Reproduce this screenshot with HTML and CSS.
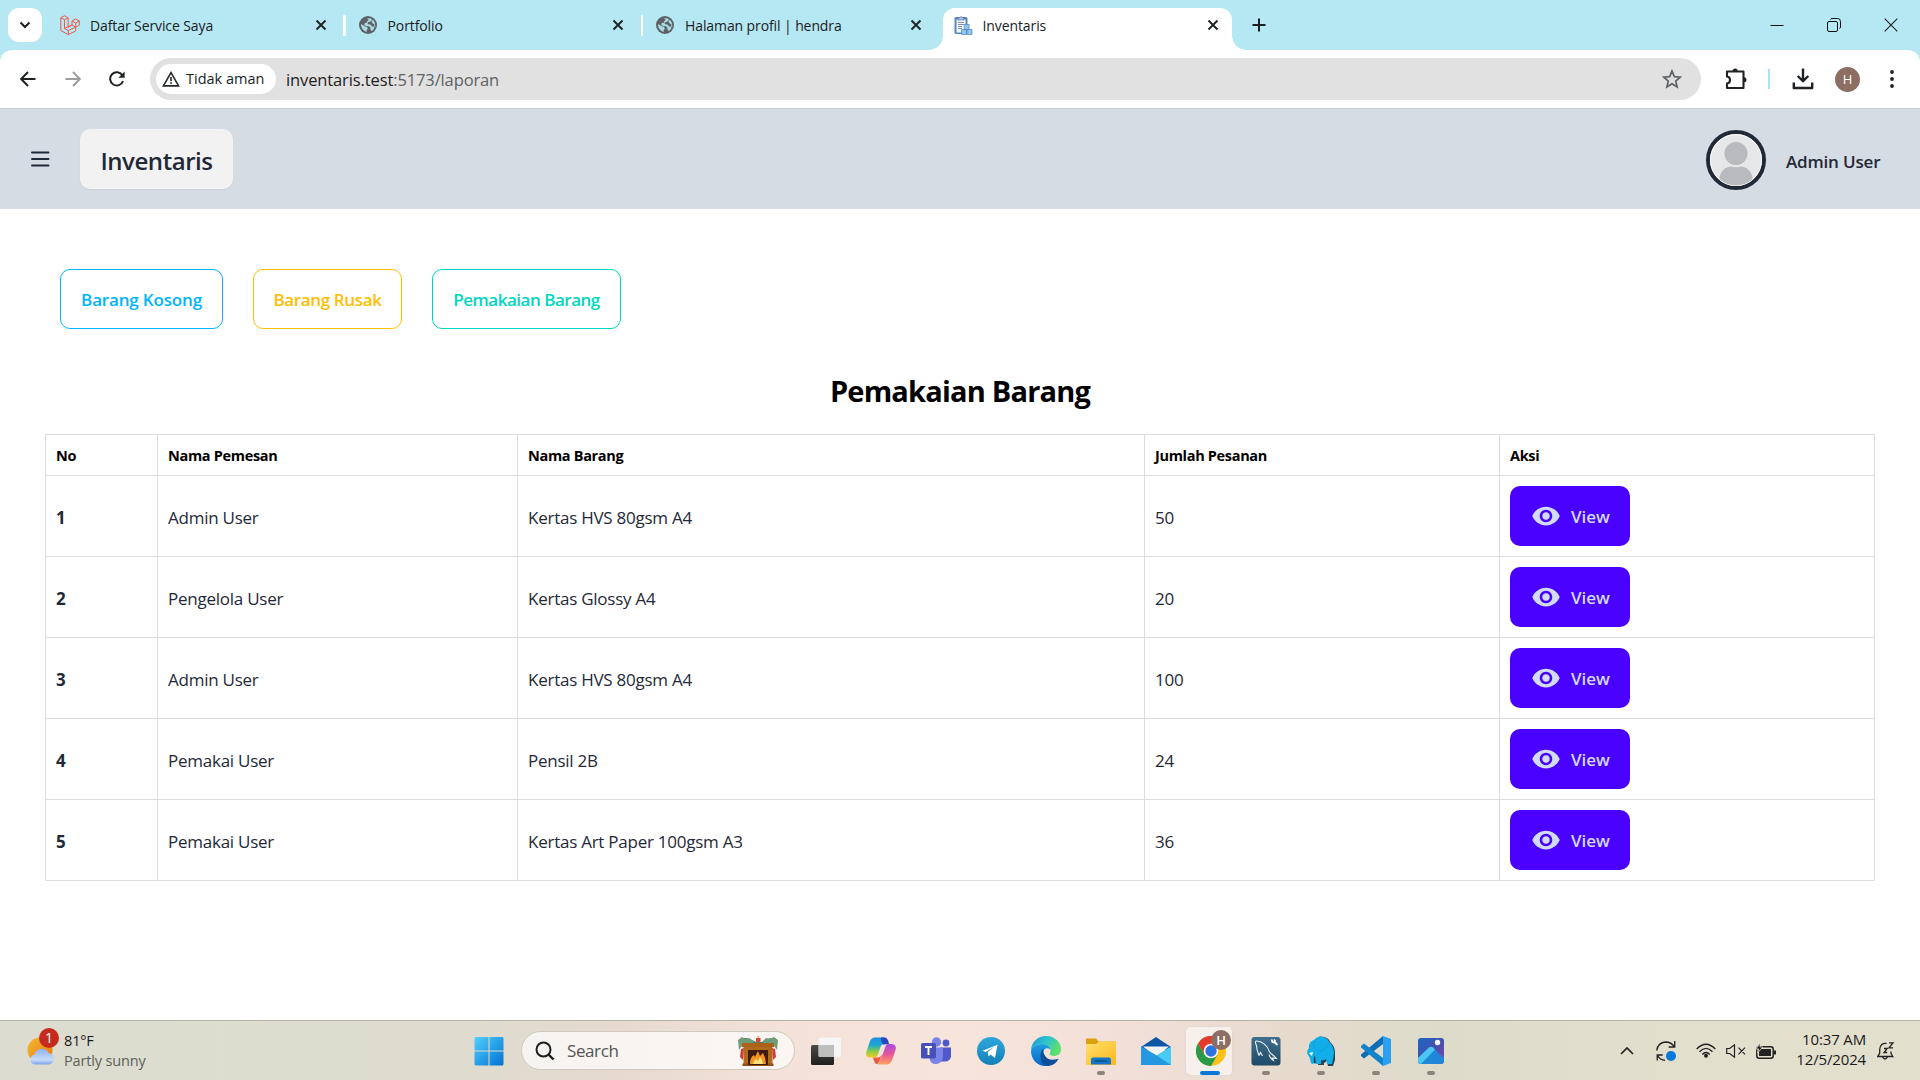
FILE: index.html
```html
<!DOCTYPE html>
<html lang="id">
<head>
<meta charset="utf-8">
<title>Inventaris</title>
<link rel="stylesheet" href="styles.css">
</head>
<body>
<svg class="defs" aria-hidden="true">
  <defs>
    <symbol id="close" viewBox="0 0 12 12"><path d="M1.500 1.500l9 9M10.500 1.500l-9 9" stroke="#1c2426" stroke-width="1.900" fill="none"/></symbol>
    <symbol id="globe" viewBox="0 0 18 18"><circle cx="9" cy="9" r="9" fill="#5c6266"/><path d="M2 8l3.800 2.300 2.600.9.300 1.800-1.200 1.300.3 1.700C4.500 15 1.900 12 2 8zM8 2.200l4.300.3.500 1.800-1.800 1.500-2 .4-.4 1.800 3.200.8 1.200 1.700 2.600.2.600.9C16.500 8.500 15.800 5.500 14 4l-1.500 1 .6 2 2.300 1.500-.2 4-2.200 2.700-1.600-1.600-.1-2.300-2.200-1.200-1.900.2-1.900-1.300.4-1.900 2.100-.4.500-1.700 1.500-1z" fill="#b5e8f3" fill-opacity=".9"/></symbol>
    <symbol id="eye" viewBox="0 0 24 24"><path d="M12 4.500C7 4.500 2.730 7.610 1 12c1.730 4.390 6 7.500 11 7.500s9.270-3.110 11-7.500c-1.730-4.390-6-7.500-11-7.500zM12 17c-2.760 0-5-2.240-5-5s2.240-5 5-5 5 2.240 5 5-2.240 5-5 5zm0-8c-1.660 0-3 1.340-3 3s1.340 3 3 3 3-1.340 3-3-1.340-3-3-3z" fill="currentColor"/></symbol>
    <linearGradient id="win" x1="0" y1="0" x2="1" y2="1"><stop offset="0" stop-color="#50d0fd"/><stop offset="1" stop-color="#0172d3"/></linearGradient>
    <linearGradient id="sun" x1="0" y1="0" x2="1" y2="1"><stop offset="0" stop-color="#f0bd31"/><stop offset="1" stop-color="#f0700d"/></linearGradient>
    <linearGradient id="cloud" x1="0" y1="0" x2="0" y2="1"><stop offset="0" stop-color="#8fb3f3"/><stop offset=".7" stop-color="#c9dbf7"/><stop offset="1" stop-color="#7ba3ee"/></linearGradient>
    <linearGradient id="dark" x1="0" y1="0" x2="0" y2="1"><stop offset="0" stop-color="#4a4a48"/><stop offset="1" stop-color="#1f1f1e"/></linearGradient>
    <linearGradient id="copA" x1="0" y1="0" x2="0" y2="1"><stop offset="0" stop-color="#1d8fe8"/><stop offset=".4" stop-color="#1fa8c8"/><stop offset=".7" stop-color="#8ccf4a"/><stop offset="1" stop-color="#f7c824"/></linearGradient>
    <linearGradient id="copB" x1="0" y1="0" x2="0" y2="1"><stop offset="0" stop-color="#a94be8"/><stop offset=".5" stop-color="#e8559a"/><stop offset="1" stop-color="#fda45c"/></linearGradient>
    <linearGradient id="tg" x1="0" y1="0" x2="0" y2="1"><stop offset="0" stop-color="#2ea6dc"/><stop offset="1" stop-color="#1480ba"/></linearGradient>
    <linearGradient id="edgeA" x1="0" y1="0" x2="1" y2=".5"><stop offset="0" stop-color="#1b8fd6"/><stop offset=".5" stop-color="#2cc3cf"/><stop offset="1" stop-color="#5fe06a"/></linearGradient>
    <linearGradient id="edgeB" x1="0" y1="0" x2="0" y2="1"><stop offset="0" stop-color="#1b9de2"/><stop offset="1" stop-color="#0a68c8"/></linearGradient>
    <linearGradient id="fold" x1="0" y1="0" x2="1" y2="1"><stop offset="0" stop-color="#ffdf6e"/><stop offset="1" stop-color="#fcb91c"/></linearGradient>
    <linearGradient id="ms" x1="0" y1="0" x2="0" y2="1"><stop offset="0" stop-color="#3f6f8f"/><stop offset="1" stop-color="#1f4a66"/></linearGradient>
    <linearGradient id="ph" x1="0" y1="0" x2="1" y2="1"><stop offset="0" stop-color="#1767c4"/><stop offset=".55" stop-color="#4a4fae"/><stop offset="1" stop-color="#7d4da8"/></linearGradient>
  </defs>
</svg>

<header class="browser">
  <div class="tabs">
    <button class="tab-search"><svg width="12" height="8" viewBox="0 0 12 8"><path d="M1.500 1.500L6 6l4.500-4.500" fill="none" stroke="#1b2022" stroke-width="2"/></svg></button>
    <div class="tab">
      <svg class="fav" viewBox="0 0 20 20" fill="none" stroke="#ee5a4e" stroke-width="1"><path d="M.8 2.700L4.500.8l3.600 1.900v9.500L12 10V6l3.700-2 3.600 2v4.200l-3.600 2V16l-7.500 3.600L.8 15.500zM.8 2.700l3.700 2 3.600-2M4.500 4.700v8.800l7.500-3.500M4.500 13.500l3.800 2 7.400-3.300M8.300 15.500v4M12 6l3.700 2.100L19.300 6M15.700 8.100v4.100M12 10l3.700 2.200"/></svg>
      <span class="tab-name">Daftar Service Saya</span><svg class="x"><use href="#close"/></svg>
    </div>
    <div class="tab">
      <svg class="fav small"><use href="#globe"/></svg>
      <span class="tab-name">Portfolio</span><svg class="x"><use href="#close"/></svg>
    </div>
    <div class="tab last">
      <svg class="fav small"><use href="#globe"/></svg>
      <span class="tab-name">Halaman profil | hendra</span><svg class="x"><use href="#close"/></svg>
    </div>
    <div class="tab active">
      <svg class="fav" viewBox="0 0 20 20"><rect x="1.500" y="2" width="13" height="17" rx="1.500" fill="#5e86bd"/><path d="M3.500 4.500h9v13h-9z" fill="#f2f6fb"/><path d="M5 3h1.500a1.700 1.700 0 0 1 3.200 0H11v2H5z" fill="#b8c9e2" stroke="#4a6fa5" stroke-width=".7"/><path d="M5 7.500h6M5 9.500h6M5 11.500h4M5 13.500h4" stroke="#7d93b5" stroke-width="1"/><path d="M8.500 14.500h5v5h-5zM14 14.500h5v5h-5zM11.300 9.500h4.800v5h-4.800z" fill="#8fc4ee" stroke="#4a86c4" stroke-width=".7"/></svg>
      <span class="tab-name">Inventaris</span><svg class="x"><use href="#close"/></svg>
    </div>
    <svg class="plus" viewBox="0 0 14 14"><path d="M7 .5v13M.5 7h13" stroke="#1b2022" stroke-width="2"/></svg>
    <div class="win-controls">
      <svg width="14" height="14"><path d="M.5 7.500h13" stroke="#111" stroke-width="1"/></svg>
      <svg width="14" height="14" fill="none" stroke="#111"><rect x=".5" y="3.500" width="10" height="10" rx="1.500"/><path d="M3.500 1.500q.3-1 1.500-1h5.500a3 3 0 0 1 3 3V9q0 1.300-1 1.500"/></svg>
      <svg width="14" height="14"><path d="M.7.700l12.600 12.600M13.300.7L.7 13.300" stroke="#1b2022" stroke-width="1.100"/></svg>
    </div>
  </div>
  <div class="toolbar">
    <svg class="nav-ico back" viewBox="0 0 16 16"><path d="M15.500 8H1.500M8 1L1.200 8 8 15" fill="none" stroke="#1f2224" stroke-width="2"/></svg>
    <svg class="nav-ico fwd" viewBox="0 0 16 16"><path d="M.5 8h14M8 1l6.800 7L8 15" fill="none" stroke="#9a9c9e" stroke-width="1.900"/></svg>
    <svg class="nav-ico reload" viewBox="0 0 16 16"><path d="M14 10a6.600 6.600 0 1 1-.7-5.700" fill="none" stroke="#1f2224" stroke-width="2"/><path d="M15.600.5v6.200H9.400z" fill="#1f2224"/></svg>
    <div class="omnibox">
      <div class="chip"><svg width="18" height="16" viewBox="0 0 18 16"><path d="M9 1.600L16.600 14.900H1.400z" fill="none" stroke="#26292b" stroke-width="1.600"/><path d="M9 6v4.300M9 11.300v1.700" stroke="#26292b" stroke-width="1.600"/></svg><span class="chip-text">Tidak aman</span></div>
      <span class="url">inventaris.test<span class="path">:5173/laporan</span></span>
      <svg class="star" viewBox="0 0 20 20"><path d="M10 2l2.300 5.600 6 .5-4.600 3.900 1.400 5.900L10 14.700l-5.100 3.200L6.300 12 1.700 8.100l6-.5z" fill="none" stroke="#5f6264" stroke-width="1.700"/></svg>
    </div>
    <svg class="puzzle" viewBox="0 0 22 22"><path d="M2 3.500h16.500v16.500H2v-4.500q3-.3 3-3.500T2 8.500z" fill="none" stroke="#1f2224" stroke-width="2.100" stroke-linejoin="round"/><path d="M7.700 3a2.500 2.500 0 0 1 5 0zM19 9.300a2.500 2.500 0 0 1 0 5z" fill="#1f2224"/></svg>
    <i class="bar"></i>
    <svg class="download" viewBox="0 0 22 22"><path d="M11 .5v12M5.700 8l5.300 5.200L16.300 8M1.800 14.500V20h18.400v-5.500" fill="none" stroke="#1f2224" stroke-width="2.400" stroke-linejoin="round"/></svg>
    <span class="profile">H</span>
    <svg class="dots" viewBox="0 0 4 18"><circle cx="2" cy="2" r="1.900"/><circle cx="2" cy="9" r="1.900"/><circle cx="2" cy="16" r="1.900"/></svg>
  </div>
</header>

<nav class="navbar">
  <svg class="menu" viewBox="0 0 20 16"><path d="M2 1.500h16.500M2 8h16.500M2 14.500h16.500" stroke="#1f2937" stroke-width="1.900" stroke-linecap="round"/></svg>
  <a class="brand"><span>Inventaris</span></a>
  <svg class="avatar" viewBox="0 0 60 60"><circle cx="30" cy="30" r="28" fill="#e6e7e9" stroke="#1f2937" stroke-width="4"/><circle cx="30" cy="30" r="25.500" fill="#e6e7e9" stroke="#fff"/><circle cx="30" cy="23.500" r="11.500" fill="#b9babd"/><path d="M13.300 49C14 40 21 36.500 25 36.500q5 1.500 10 0c4 0 11 3.500 11.700 12.500A25 25 0 0 1 13.300 49z" fill="#b9babd"/></svg>
  <span class="user">Admin User</span>
</nav>

<main class="content">
  <div class="filters">
    <button class="filter info"><span>Barang Kosong</span></button>
    <button class="filter warning"><span>Barang Rusak</span></button>
    <button class="filter accent"><span>Pemakaian Barang</span></button>
  </div>
  <h1><span>Pemakaian Barang</span></h1>
  <table>
    <colgroup><col class="c1"><col class="c2"><col class="c3"><col class="c4"><col class="c5"></colgroup>
    <thead><tr><th>No</th><th>Nama Pemesan</th><th>Nama Barang</th><th>Jumlah Pesanan</th><th>Aksi</th></tr></thead>
    <tbody>
      <tr><th>1</th><td>Admin User</td><td>Kertas HVS 80gsm A4</td><td>50</td><td><button class="view"><svg><use href="#eye"/></svg>View</button></td></tr>
      <tr><th>2</th><td>Pengelola User</td><td>Kertas Glossy A4</td><td>20</td><td><button class="view"><svg><use href="#eye"/></svg>View</button></td></tr>
      <tr><th>3</th><td>Admin User</td><td>Kertas HVS 80gsm A4</td><td>100</td><td><button class="view"><svg><use href="#eye"/></svg>View</button></td></tr>
      <tr><th>4</th><td>Pemakai User</td><td>Pensil 2B</td><td>24</td><td><button class="view"><svg><use href="#eye"/></svg>View</button></td></tr>
      <tr><th>5</th><td>Pemakai User</td><td>Kertas Art Paper 100gsm A3</td><td>36</td><td><button class="view"><svg><use href="#eye"/></svg>View</button></td></tr>
    </tbody>
  </table>
</main>

<footer class="taskbar">
  <div class="weather">
    <div class="weather-ico">
      <svg width="28" height="28" viewBox="0 0 28 28"><circle cx="13" cy="13" r="12.500" fill="url(#sun)"/><path d="M7.500 27.500a5 5 0 0 1 0-9.800 7.500 7.500 0 0 1 14-1.700 5.800 5.800 0 0 1 .5 11.500z" fill="url(#cloud)"/></svg>
      <b class="badge">1</b>
    </div>
    <div class="weather-text"><span class="temp">81°F</span><span class="sky">Partly sunny</span></div>
  </div>
  <div class="apps">
    <div class="app"><svg viewBox="0 0 30 30"><path d="M1.500 1h13v13.500H.5V2zM15.500 1h13l1 1v12.500h-14zM.5 15.500h14v14h-13l-1-1zM15.500 15.500h14v13l-1 1h-13z" fill="url(#win)"/></svg></div>
    <div class="search">
      <svg class="lens" viewBox="0 0 20 20"><circle cx="8.500" cy="8.500" r="7" fill="none" stroke="#1e1e1e" stroke-width="2"/><path d="M13.500 13.500L18.500 18.500" stroke="#1e1e1e" stroke-width="2.400"/></svg>
      <span class="search-text">Search</span>
      <svg class="fire" viewBox="0 0 40 32"><path d="M18 3h4.500v6H18z" fill="#d9453a"/><path d="M20.200 0l1 2.600h-2z" fill="#f5a742"/><path d="M1 5q6-4 13 0l4 2h6l5-3q6-2 10 2l-2 3H3z" fill="#4b7f5c"/><path d="M0 5l4-3 3 2 4-1 5 4-4 3-5-2-4 4-2 3zM40 5l-4-3-4 2-4-1-4 4 4 3 6-2 3 4 2 3z" fill="#6e9b78"/><path d="M3 14l3-1-1 12-3-3zM37 14l-3-1 1 12 3-3z" fill="#d63a3c"/><path d="M4 8h32v4H4z" fill="#a96218"/><path d="M5.500 12h29v17h-29z" fill="#b06a1c"/><path d="M4.500 28.500h31V31h-31z" fill="#93500f"/><path d="M10 15h20v15H10z" fill="#3e1b0c"/><path d="M12 29q0-7 4-9l1 2 3-6 2 5 3-3q3 5 3 11z" fill="#f29422"/><path d="M15 29q1-4 3-5l2 2 2-4q3 4 3 7z" fill="#fee27c"/></svg>
    </div>
    <div class="app"><svg viewBox="0 0 30 30"><rect y="9" width="23" height="20" rx="1.500" fill="url(#dark)"/><rect x="7.500" y="1.500" width="22.500" height="19.500" rx="1.500" fill="#f6f6f6"/><path d="M8 9h15v12H8z" fill="#bfbfbe"/></svg></div>
    <div class="app"><svg viewBox="0 0 30 30"><path d="M9 1.500h9q3 .5 4 6l-5 1q-2 0-3 4l-2 6q-1 3-4 3H3q-4-1-2.500-6l3-9q1.500-5 5.500-5z" fill="url(#copA)"/><path d="M15 1.500h4q3 .5 4 6.500l-5 .5q-3-1-3-7z" fill="#2749bd"/><path d="M22 8h4q5 1 3.500 6l-3 9q-1.500 5-5.500 5.500h-9l3-7q1-1 2-4l2.500-7q.5-2.500 2.500-2.500z" fill="url(#copB)"/><path d="M7 21.500h5q2 0 4-3l-3 7q-1 3-2.500 2.500Q8.500 27.500 7 21.500z" fill="#f05a38"/></svg></div>
    <div class="app"><svg viewBox="0 0 30 30"><circle cx="25" cy="7" r="3.400" fill="#5059c9"/><path d="M19 11.500h11v9q-1 5-6 5h-5z" fill="#5059c9"/><circle cx="15.500" cy="6" r="4.700" fill="#7b83eb"/><path d="M8.500 11.500H22V21q-1 7-7 7t-6.500-6z" fill="#7b83eb"/><rect y="7" width="15" height="15.500" rx="1.500" fill="#4650b8"/><path d="M4 11h7M7.500 11v8" stroke="#fff" stroke-width="1.900"/></svg></div>
    <div class="app"><svg viewBox="0 0 30 30"><circle cx="15" cy="15" r="14" fill="url(#tg)"/><path d="M6.500 14.700L21.500 8.700 19 22l-4.500-3.500-2 2-.8-4.200 6.500-5.500-8.500 5.200z" fill="#fff"/></svg></div>
    <div class="app"><svg viewBox="0 0 30 30"><path d="M0 15C0 6 7 0 15 0c9 0 15 6.500 15 13 0 5-3.500 7-7 7-3 0-4.500-1.200-4.500-2.200s1-1.500 1-3.800C19.500 11 16 8 11 8 5 8 1 11 0 15z" fill="url(#edgeA)"/><path d="M0 15C1 11 5 8 11 8c5 0 8.500 3 8.500 6-1.500-2.200-5-2.500-7 .5-3 5 .5 12.500 8 12.500-1.500 2-3.500 3-6.500 3C6 30 0 23 0 15z" fill="url(#edgeB)"/><path d="M12.500 12.500C7.500 16 9 29.500 16 30c5 0 9-2.500 11.500-7-.3-.7-2 .8-6 .8-5.500 0-10-5-9-11.300z" fill="#0e4f9a"/></svg></div>
    <div class="app"><svg viewBox="0 0 30 30"><path d="M0 2.500h10l2.500 3H29q1 0 1 1V12H0z" fill="#dca10c"/><path d="M0 8h10l3-2.500h17V29H0z" fill="url(#fold)"/><path d="M5 28.500v-5q0-2 2-2h16q2 0 2 2v5z" fill="#1475c8"/><path d="M9 25h12" stroke="#0c4e8f" stroke-width="1.500"/></svg><i class="dot"></i></div>
    <div class="app"><svg viewBox="0 0 30 30"><path d="M0 11L15 1l15 10v3H0z" fill="#0c56a5"/><path d="M2 10.500h26L15 21z" fill="#f4f4f4"/><path d="M0 10.500l14 8.500-14 10z" fill="#2196de"/><path d="M30 10.500V29H0z" fill="#4bc9f5"/><path d="M0 10.500l15 8.500 15 10H0z" fill="#2498e0"/></svg></div>
    <div class="app current"><svg viewBox="0 0 30 30"><circle cx="15" cy="15" r="15" fill="#fbc116"/><path d="M28 7.500A15 15 0 0 0 2 7.500L8.500 19 15 7.500z" fill="#e33b2e"/><path d="M2 7.500A15 15 0 0 0 15 30l6.500-11.300h-13z" fill="#2a9a48"/><circle cx="15" cy="15" r="7.300" fill="#fff"/><circle cx="15" cy="15" r="5.700" fill="#2f73e0"/></svg><b class="badge h">H</b><i class="dot wide"></i></div>
    <div class="app"><svg viewBox="0 0 30 30"><rect x=".5" y="1" width="29" height="28.500" rx="3" fill="url(#ms)"/><path d="M8 19.500C6 15 5.500 12 5.500 9.500 4 6.500 4 5 5.500 5c5 0 11 4 13 11 1.500 2 4 3 7 6.500l-4-.5 1 2.500q-3-1.500-4.500-6M8 19.500l1.500-3 2 3.500" fill="none" stroke="#e8f1f6" stroke-width="1.100"/><path d="M20.500 3.500l1 2.500 2.500.5 2.500 2.500M23 3.500l1.500 2" fill="none" stroke="#fff" stroke-width="1.900"/></svg><i class="dot"></i></div>
    <div class="app"><svg viewBox="0 0 30 30"><path d="M4 13q-1-7 5-9 4-5 9-3 5 1 6 5 5 4 5 11v7l-2 6h-5l-1-5-3 2v2h-6v-6l-1-4q-1 4 0 7-2 3-4 0Q4 21 2 17q0-3 2-4z" fill="#27455a"/><path d="M3 12q-1-6 5-8 4-5 9-3 5 1 6 5 5 4 5 11l-1 6-1 5h-5l-1-5q-3 2-5 1v4h-5l-1-9q-2 4-1 8-2 2-3 0Q4 21 1 17q0-3 2-5z" fill="#12aeea"/><path d="M9 5q-4 8 3 10 6 1 10-7" fill="none" stroke="#0b9ad6" stroke-width=".8"/><path d="M3 17l4-1-1 4z" fill="#fff"/></svg><i class="dot"></i></div>
    <div class="app"><svg viewBox="0 0 30 30"><path d="M22 0v8L3 22.500 0 20v-1.500z" fill="#0a6db5"/><path d="M22 30v-8L3 7.500 0 10v1.500z" fill="#1483cc"/><path d="M22 0l8 3v24l-8 3z" fill="#2ba0f0"/></svg><i class="dot"></i></div>
    <div class="app"><svg viewBox="0 0 30 30"><rect x="2" y="2" width="26" height="26" rx="3" fill="url(#ph)"/><circle cx="21.500" cy="6.500" r="2.700" fill="#f3f5fb"/><path d="M2 22l11-10.500q2-1.500 4 0L28 22v4q-1 2-3 2H5q-3 0-3-3z" fill="#1f86d8"/><path d="M2 22l11-10.500q2-1.500 4 0l2 2L5 28q-3 0-3-3z" fill="#4cc6f3"/></svg><i class="dot"></i></div>
  </div>
  <div class="tray">
    <svg class="t-chev" viewBox="0 0 14 8"><path d="M1 7l6-6 6 6" fill="none" stroke="#222" stroke-width="1.700"/></svg>
    <svg class="t-sync" viewBox="0 0 20 20" fill="none" stroke="#222" stroke-width="1.300"><path d="M.7 9.500Q2 1.500 9.500 1q6 0 9 5M18.700 0v6h-6M9 19.300Q4 19 1.500 14.500M1.200 19.500V14h5.500"/><circle cx="15" cy="15" r="5" fill="#0a78d6" stroke="none"/></svg>
    <svg class="t-wifi" viewBox="0 0 20 15" fill="none" stroke="#222" stroke-width="1.400"><path d="M.7 6Q10-3.500 19.300 6M3.500 8.700Q10 2 16.500 8.700M6.300 11.400Q10 7.500 13.700 11.400"/><circle cx="10" cy="12.700" r="2" fill="#222" stroke="none"/></svg>
    <svg class="t-vol" viewBox="0 0 20 14" fill="none" stroke="#222" stroke-width="1.200"><path d="M.7 4.500h3L8.500.8v12.400L3.700 9.500h-3zM12.500 3.700l6.500 6.600M19 3.700l-6.500 6.600"/></svg>
    <svg class="t-bat" viewBox="0 0 20 16"><rect x=".8" y="3.800" width="16.400" height="11.400" rx="2.500" fill="none" stroke="#222" stroke-width="1.500"/><path d="M3 6h12v7H3zM17.800 7.500h2.200v4h-2.200z" fill="#222"/><path d="M4 0L0 6h2.700L1.500 10 6.800 4H4z" fill="#222" stroke="#e0decb" stroke-width=".8"/></svg>
    <div class="clock"><span>10:37 AM</span><span>12/5/2024</span></div>
    <svg class="t-bell" viewBox="0 0 18 18" fill="none" stroke="#222" stroke-width="1.300"><path d="M9.500 1.500Q3 1 2.700 7.500v3.500L.8 14.500h15L14 11.500V9.500M5.500 15q2.500 4 5 0M7 6.500h3.200L7 10.500h3.200M12 .8h4L12 5.800h4"/></svg>
  </div>
</footer>
</body>
</html>
```
FILE: styles.css
```css
* { box-sizing: border-box; }
body {
  margin: 0;
  height: 1080px;
  display: flex;
  flex-direction: column;
  overflow: hidden;
  background: #fff;
  color: #1f2937;
  font-family: "Segoe UI", "Open Sans", "Noto Sans", sans-serif;
  font-size: 17px;
  letter-spacing: -.25px;
}
svg { display: block; flex: none; }
button { font: inherit; letter-spacing: inherit; border: 0; background: none; padding: 0; }
span { white-space: nowrap; }
.defs { position: absolute; width: 0; height: 0; }

/* Browser window */
.browser { flex: none; height: 109px; background: #b5e8f3; border-bottom: 1px solid #c6cbcc; }
.tabs { height: 50px; display: flex; align-items: center; padding-left: 8px; color: #1b2022; font-size: 14px; letter-spacing: -.1px; }
.tab-search { width: 34px; height: 34px; margin-right: 6px; border-radius: 11px; background: #fff; display: flex; align-items: center; justify-content: center; }
.tab { position: relative; width: 297.500px; height: 50px; display: flex; align-items: center; padding: 0 19px 0 12px; flex: none; }
.tab:not(.active):not(.last)::after { content: ""; position: absolute; right: 0; top: 15px; width: 2.500px; height: 21px; border-radius: 1px; background: #fff; }
.fav { width: 20px; height: 20px; margin-right: 10px; }
.fav.small { width: 18px; height: 18px; margin: 0 11px 0 1px; }
.x { width: 12px; height: 12px; margin-left: auto; }
.tab.active { width: 289px; height: 42px; margin: 8px 0 0 2px; padding: 0 13px 8px 10px; background: #fff; border-radius: 12px 12px 0 0; }
.tab.active::before, .tab.active::after { content: ""; position: absolute; bottom: 0; width: 14px; height: 14px; }
.tab.active::before { left: -14px; background: radial-gradient(circle at 0 0, transparent 13.500px, #fff 14px); }
.tab.active::after { right: -14px; background: radial-gradient(circle at 100% 0, transparent 13.500px, #fff 14px); }
.plus { width: 14px; height: 14px; margin-left: 20px; }
.win-controls { display: flex; gap: 43px; margin-left: auto; padding-right: 22px; }

.toolbar { height: 58px; display: flex; align-items: center; background: #fff; border-radius: 12px 12px 0 0; padding: 0 26px 0 20px; }
.nav-ico { width: 16px; height: 16px; }
.fwd { margin-left: 29px; }
.reload { margin-left: 28px; }
.omnibox { width: 1551px; height: 42px; margin-left: 25px; border-radius: 21px; background: #e1e1e1; display: flex; align-items: center; padding: 0 19px 0 6px; }
.chip { width: 120px; height: 30px; border-radius: 15px; background: #fff; display: flex; align-items: center; padding-left: 6px; gap: 6px; color: #1b1d1f; font-size: 14.500px; font-weight: 500; letter-spacing: 0; }
.chip-text { padding-bottom: 2px; }
.url { margin-left: 10px; font-size: 16.500px; letter-spacing: -.12px; color: #1f2123; }
.path { color: #5f6264; }
.star { width: 20px; height: 20px; margin-left: auto; }
.puzzle { width: 22px; height: 22px; margin-left: 24px; }
.bar { width: 2px; height: 20px; margin-left: 21px; background: #a8e4f1; }
.download { width: 22px; height: 22px; margin-left: 22px; }
.profile { width: 25px; height: 25px; margin-left: 21px; border-radius: 50%; background: #8d6e63; color: #fff; font-size: 13px; display: flex; align-items: center; justify-content: center; }
.dots { width: 4px; height: 18px; margin-left: auto; fill: #1f2224; }

/* Application bar */
.navbar { flex: none; height: 100px; display: flex; align-items: center; background: #d6dce4; padding: 0 40px 0 30px; }
.menu { width: 20px; height: 16px; }
.brand { width: 153px; height: 60px; margin-left: 30px; border-radius: 10px; background: #f2f2f2; box-shadow: 0 1px 2px rgba(0, 0, 0, .05); display: flex; align-items: center; justify-content: center; font-size: 24px; font-weight: 600; letter-spacing: -.45px; padding-top: 3px; }
.avatar { width: 60px; height: 60px; margin: 2px 20px 0 auto; }
.user { width: 94px; padding-top: 4px; font-weight: 600; letter-spacing: -.17px; }

/* Report page */
.content { flex: 1; padding: 60px 45px 0; }
.filters { display: flex; gap: 30px; padding-left: 15px; }
.filter { height: 60px; border: 1px solid currentColor; border-radius: 10px; font-weight: 600; padding-top: 1px; }
.info { width: 163px; color: #00b5ff; letter-spacing: -.17px; }
.warning { width: 149px; color: #ffbe00; letter-spacing: -.35px; }
.accent { width: 189px; color: #00d7c0; letter-spacing: -.48px; }
h1 { margin: 39px 0 0; height: 66px; line-height: 45px; text-align: center; color: #000; font-size: 29px; font-weight: 700; letter-spacing: -.8px; }
table { width: 1829px; table-layout: fixed; border-collapse: collapse; }
.c1 { width: 112px; }
.c2 { width: 360px; }
.c3 { width: 627px; }
.c4 { width: 355px; }
.c5 { width: 375px; }
th, td { border: 1px solid #ddd; padding: 3px 10px 0; text-align: left; white-space: nowrap; }
td:last-child { padding-top: 0; }
thead tr { height: 41px; }
thead th { padding-top: 1px; color: #000; font-size: 14.500px; font-weight: 700; letter-spacing: -.32px; }
tbody tr { height: 81px; }
tbody th { font-weight: 700; }
.view { width: 120px; height: 60px; border-radius: 10px; background: #4a00ff; color: #d1dbff; font-weight: 600; letter-spacing: -.05px; display: flex; align-items: center; padding-left: 21px; gap: 10px; }
.view svg { width: 30px; height: 30px; }

/* Taskbar */
.taskbar { flex: none; height: 60px; display: flex; align-items: center; border-top: 1px solid #b3b2a6; background: linear-gradient(90deg, #dcddd0 0, #dddccf 430px, #e6dad0 620px, #f4e2d8 780px, #f7e5dc 960px, #f2e0d8 1130px, #e6dacd 1290px, #dddccb 1440px, #e2dfcd 1700px, #e2dfcd 100%); font-size: 14.500px; letter-spacing: -.15px; color: #1b1b1a; }
.weather { width: 435px; display: flex; padding-left: 27px; gap: 8px; }
.weather-ico { position: relative; width: 29px; padding-top: 6px; }
.badge { position: absolute; left: 12px; top: -3px; width: 20px; height: 20px; border-radius: 50%; background: #c42b1c; color: #fff; font-size: 14px; font-weight: 500; display: flex; align-items: center; justify-content: center; }
.weather-text, .clock { display: flex; flex-direction: column; line-height: 20px; padding-bottom: 4px; }
.weather-text { margin-bottom: -4px; }
.sky { color: #5e5f58; }
.apps { display: flex; align-items: center; padding-left: 26px; }
.app { position: relative; width: 55px; height: 48px; display: flex; align-items: center; justify-content: center; }
.app svg { width: 30px; height: 30px; }
.search { width: 274px; height: 39px; margin: 0 3px 0 5px; border-radius: 20px; background: rgba(255, 255, 255, .7); border: 1px solid #cfc8bf; display: flex; align-items: center; padding: 0 16px 0 13px; font-size: 17px; letter-spacing: -.4px; color: #555; }
.lens { width: 20px; height: 20px; margin-right: 12px; }
.fire { width: 40px; height: 32px; margin-left: auto; }
.dot { position: absolute; bottom: 0; left: 24px; width: 8px; height: 4px; border-radius: 2px; background: #8b837c; }
.current::before { content: ""; position: absolute; inset: 0 4px 0 3px; border-radius: 5px; background: rgba(255, 255, 255, .55); box-shadow: inset -4px 0 0 -2px #e6d9d2, 0 0 0 1px #e6d9d2; }
.current svg { position: relative; }
.wide { left: 17px; width: 20px; background: #0a78d6; }
.badge.h { left: 28px; top: 3px; background: #8d6e63; font-size: 13px; font-weight: 600; }
.tray { display: flex; align-items: center; margin-left: auto; padding-right: 25px; }
.t-chev { width: 14px; height: 8px; margin-right: 22px; }
.t-sync { width: 20px; height: 20px; margin-right: 20px; }
.t-wifi { width: 20px; height: 15px; margin-right: 10px; }
.t-vol { width: 20px; height: 14px; margin-right: 10px; }
.t-bat { width: 20px; height: 16px; margin-right: 20px; }
.clock { width: 70px; align-items: flex-end; margin-right: 11px; font-size: 15px; }
.t-bell { width: 18px; height: 18px; }
```
